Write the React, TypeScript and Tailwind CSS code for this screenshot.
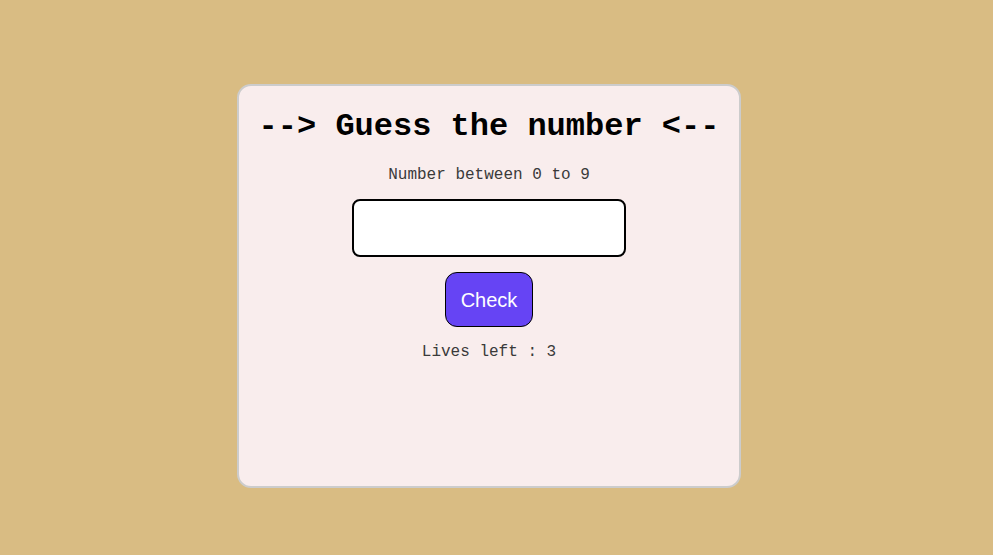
import { useState } from 'react';

export default function App() {
  const [guess, setGuess] = useState('');
  const [lives] = useState(3);

  return (
    <div className="min-h-[555px] w-full bg-[#d9bc83] flex justify-center pt-[84px] pr-[15px]">
      <div className="w-[504px] h-[404px] bg-[#f9eded] border-2 border-[#cccccc] rounded-[14px] flex flex-col items-center pt-[21px] font-['Liberation_Mono',monospace]">
        <h1 className="text-[32px] leading-[40px] font-bold text-black">--&gt; Guess the number &lt;--</h1>
        <p className="mt-[18px] text-[16px] leading-[20px] text-[#3a3a3a]">Number between 0 to 9</p>

        <input
          type="text"
          value={guess}
          onChange={(e) => setGuess(e.target.value)}
          className="mt-[14px] w-[274px] h-[58px] bg-white border-2 border-black rounded-[8px] px-3 outline-none"
        />

        <button className="mt-[15px] w-[88px] h-[55px] bg-[#6644f4] border border-black rounded-[12px] text-white text-[20px] font-['Liberation_Sans',Arial,sans-serif]">
          Check
        </button>

        <p className="mt-[15px] text-[16px] leading-[20px] text-[#3a3a3a]">Lives left : {lives}</p>
      </div>
    </div>
  );
}
